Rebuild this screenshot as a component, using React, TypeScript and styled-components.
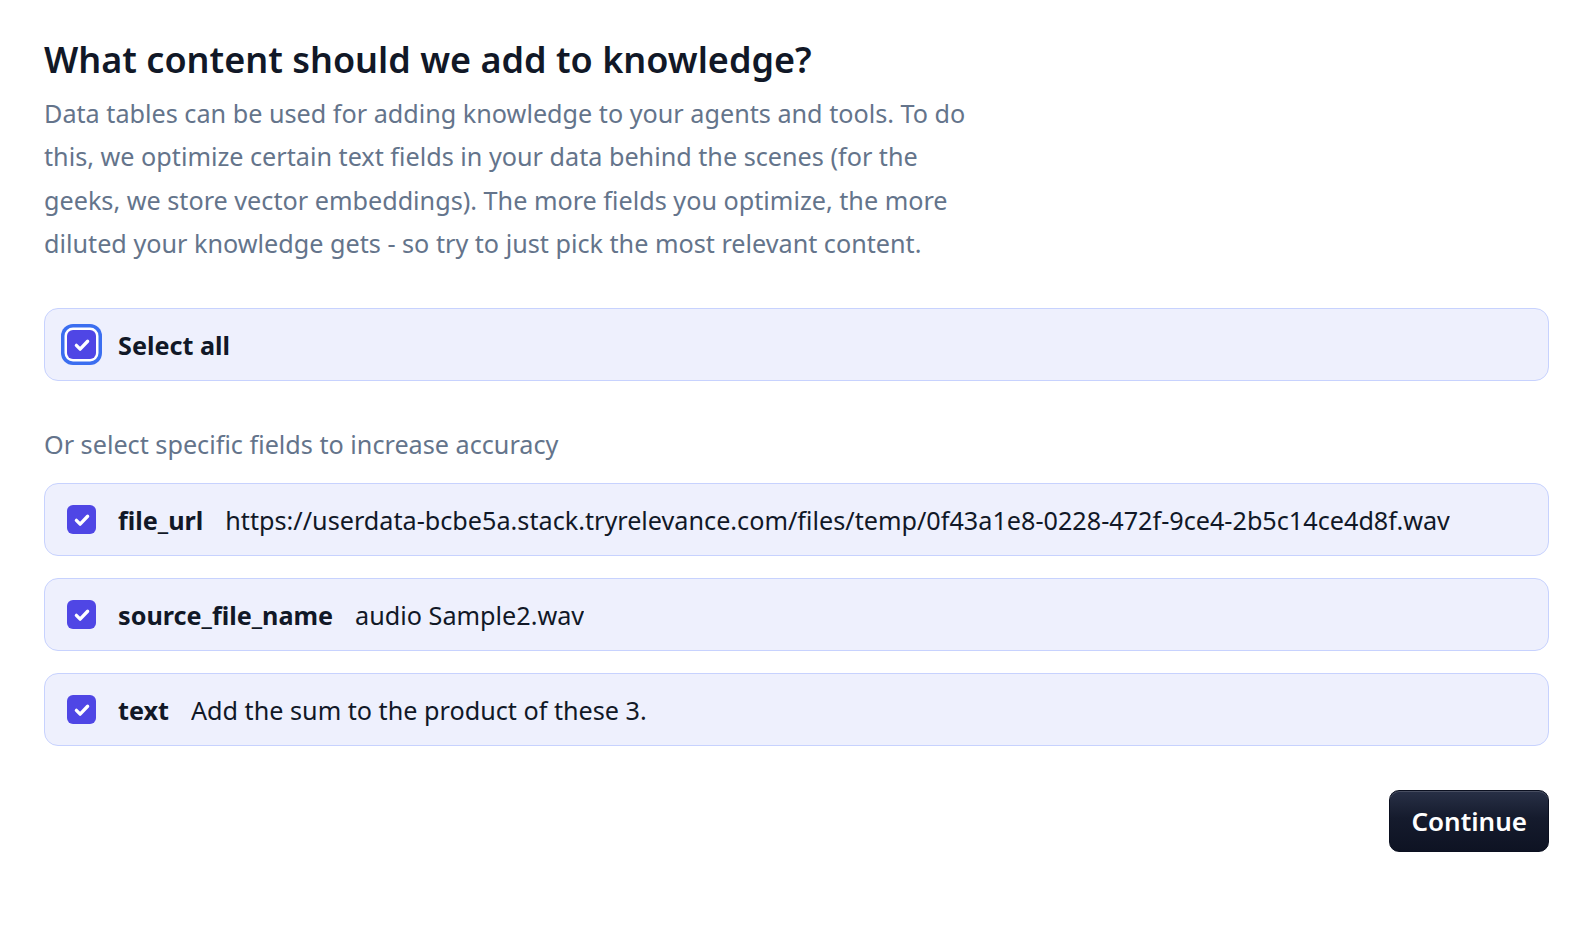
import React, { useState } from "react";
import styled, { createGlobalStyle } from "styled-components";

const Global = createGlobalStyle`
  html, body { margin: 0; padding: 0; background: #ffffff; overflow: hidden; }
  body { font-family: "Noto Sans", "Open Sans", sans-serif; color: #111827; }
  * { box-sizing: border-box; }
`;

const Page = styled.div`
  padding: 36px 35px 30px 44px;
  display: flex;
  flex-direction: column;
`;

const Title = styled.h1`
  margin: 0;
  font-size: 36px;
  line-height: 48px;
  font-weight: 600;
  color: #111827;
`;

const Lead = styled.p`
  margin: 8px 0 0;
  max-width: 930px;
  font-size: 25.2px;
  line-height: 43.3px;
  color: #64748b;
`;

const Box = styled.label<{ $gap?: number }>`
  display: flex;
  align-items: center;
  gap: 22px;
  height: 73px;
  padding: 0 20px 0 22px;
  margin-top: ${(p) => p.$gap ?? 0}px;
  background: #eef0fd;
  border: 1px solid #c7d2fe;
  border-radius: 14px;
  cursor: pointer;
  font-size: 25.2px;
`;

const Check = styled.span<{ $focus?: boolean }>`
  flex: none;
  width: 29px;
  height: 29px;
  border-radius: 6px;
  background: #4f46e5;
  display: flex;
  align-items: center;
  justify-content: center;
  box-shadow: ${(p) => (p.$focus ? "0 0 0 2.5px #ffffff, 0 0 0 6px #3b6ef0" : "none")};
`;

const FieldName = styled.span`
  font-weight: 700;
  color: #111827;
`;

const FieldValue = styled.span`
  color: #111827;
  white-space: nowrap;
  overflow: hidden;
  text-overflow: ellipsis;
`;

const Subhead = styled.div`
  margin-top: 45px;
  font-size: 25.2px;
  line-height: 36px;
  color: #64748b;
`;

const List = styled.div`
  display: flex;
  flex-direction: column;
  gap: 22px;
  margin-top: 21px;
`;

const Footer = styled.div`
  display: flex;
  justify-content: flex-end;
  margin-top: 44px;
`;

const Button = styled.button`
  height: 62px;
  padding: 0 21px;
  border-radius: 10px;
  border: 1px solid #0b1020;
  background: linear-gradient(180deg, #283046 0%, #151b2d 45%, #0e1323 100%);
  color: #ffffff;
  font-family: "Noto Sans", "Open Sans", sans-serif;
  font-size: 26px;
  font-weight: 600;
  box-shadow: inset 0 1px 0 rgba(255, 255, 255, 0.15);
  cursor: pointer;
`;

const Tick = () => (
  <svg width="18" height="18" viewBox="0 0 24 24" fill="none" stroke="#fff" strokeWidth="4.4" strokeLinecap="round" strokeLinejoin="round">
    <path d="M4.5 12.5l5 5L19.5 7" />
  </svg>
);

const fields = [
  { name: "file_url", value: "https://userdata-bcbe5a.stack.tryrelevance.com/files/temp/0f43a1e8-0228-472f-9ce4-2b5c14ce4d8f.wav" },
  { name: "source_file_name", value: "audio Sample2.wav" },
  { name: "text", value: "Add the sum to the product of these 3." },
];

export default function App() {
  const [sel] = useState(true);
  return (
    <>
      <Global />
      <Page>
        <Title>What content should we add to knowledge?</Title>
        <Lead>
          Data tables can be used for adding knowledge to your agents and tools. To do this, we optimize certain text
          fields in your data behind the scenes (for the geeks, we store vector embeddings). The more fields you
          optimize, the more diluted your knowledge gets - so try to just pick the most relevant content.
        </Lead>
        <Box $gap={43}>
          <Check $focus={sel}>
            <Tick />
          </Check>
          <FieldName>Select all</FieldName>
        </Box>
        <Subhead>Or select specific fields to increase accuracy</Subhead>
        <List>
          {fields.map((f) => (
            <Box key={f.name}>
              <Check>
                <Tick />
              </Check>
              <FieldName>{f.name}</FieldName>
              <FieldValue>{f.value}</FieldValue>
            </Box>
          ))}
        </List>
        <Footer>
          <Button>Continue</Button>
        </Footer>
      </Page>
    </>
  );
}
